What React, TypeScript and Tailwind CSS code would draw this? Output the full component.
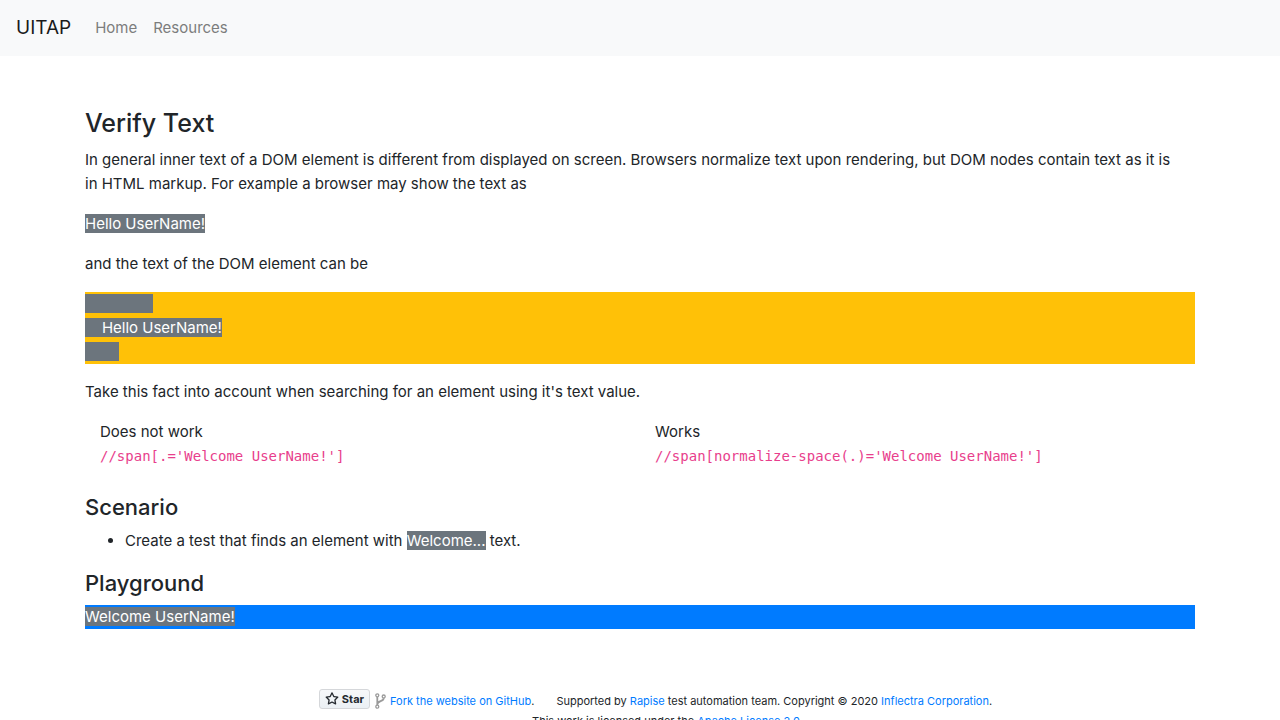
import React from "react";

const mark = "bg-[#6c757d] text-white";
const link = "text-[#007bff] hover:underline";
const code = "font-['DejaVu_Sans_Mono',monospace] text-sm leading-6 text-[#e83e8c]";

export default function App() {
  return (
    <div className="bg-white font-[Inter,sans-serif] text-[15px] leading-6 text-[#212529]">
      <nav className="flex h-14 items-center bg-[#f8f9fa] px-4">
        <a href="#" className="mr-4 text-[19px] text-[#1a1a1a]">UITAP</a>
        <ul className="flex text-[#7c7d7d]">
          <li><a href="#" className="p-2">Home</a></li>
          <li><a href="#" className="p-2">Resources</a></li>
        </ul>
      </nav>
      <main className="mx-auto max-w-[1140px] px-[15px] pt-[50px]">
        <h3 className="mb-2 text-[25px] leading-[34px] font-medium">Verify Text</h3>
        <p className="mb-4">
          In general inner text of a DOM element is different from displayed on screen. Browsers normalize text upon rendering, but DOM nodes contain text as it is<br />
          in HTML markup. For example a browser may show the text as
        </p>
        <p className="mb-4"><span className={mark}>Hello UserName!</span></p>
        <p className="mb-4">and the text of the DOM element can be</p>
        <div className="mb-4 bg-[#ffc107] whitespace-pre">
          <span className={mark}>{"                \n    Hello UserName!\n        "}</span>
        </div>
        <p className="mb-4">Take this fact into account when searching for an element using it's text value.</p>
        <div className="mb-[25px] grid grid-cols-2">
          <div className="px-[15px]"><div>Does not work</div><code className={code}>//span[.='Welcome UserName!']</code></div>
          <div className="px-[15px]"><div>Works</div><code className={code}>//span[normalize-space(.)='Welcome UserName!']</code></div>
        </div>
        <h4 className="mb-2 text-[22px] leading-7 font-medium">Scenario</h4>
        <ul className="mb-4 list-disc pl-10">
          <li>Create a test that finds an element with <span className={mark}>Welcome...</span> text.</li>
        </ul>
        <h4 className="mb-2 text-[22px] leading-7 font-medium">Playground</h4>
        <div className="bg-[#007bff]"><span className={mark}>Welcome UserName!</span></div>
      </main>
      <footer className="mt-[60px] pl-[55px] text-[11px] leading-5">
        <div className="flex items-start justify-center pr-6">
          <a href="#" className="mr-[5px] flex h-5 items-center gap-[3px] rounded-[3px] border border-[#d5d7da] bg-linear-to-b from-[#f6f8fa] to-[#ebf0f4] px-[5px] font-bold text-[#24292f]">
            <svg viewBox="0 0 16 16" className="size-3.5" fill="currentColor" aria-hidden="true"><path d="M8 .25a.75.75 0 0 1 .673.418l1.882 3.815 4.21.612a.75.75 0 0 1 .416 1.279l-3.046 2.97.719 4.192a.75.75 0 0 1-1.088.791L8 12.347l-3.766 1.98a.75.75 0 0 1-1.088-.79l.72-4.194L.818 6.374a.75.75 0 0 1 .416-1.28l4.21-.611L7.327.668A.75.75 0 0 1 8 .25Zm0 2.445L6.615 5.5a.75.75 0 0 1-.564.41l-3.097.45 2.24 2.184a.75.75 0 0 1 .216.664l-.528 3.084 2.769-1.456a.75.75 0 0 1 .698 0l2.77 1.456-.53-3.084a.75.75 0 0 1 .216-.664l2.24-2.183-3.096-.45a.75.75 0 0 1-.564-.41Z" /></svg>
            Star
          </a>
          <div className="mt-0.5 flex h-5 items-center">
            <svg viewBox="0 0 11 16" className="mr-1 h-4 w-[11px]" fill="none" stroke="#9a9a9a" aria-hidden="true">
              <circle cx="2.300" cy="2.300" r="1.500" strokeWidth="1.300" />
              <circle cx="2.300" cy="13.700" r="1.500" strokeWidth="1.300" />
              <circle cx="8.700" cy="3.500" r="1.500" strokeWidth="1.300" />
              <path d="M2.300 4v8M8.700 5.200C8.700 8.800 2.300 7.500 2.300 11.500" strokeWidth="1.800" />
            </svg>
            <span className="mr-[22px]"><a href="#" className={link}>Fork the website on GitHub</a>.</span>
            <span>Supported by <a href="#" className={link}>Rapise</a> test automation team. Copyright © 2020 <a href="#" className={link}>Inflectra Corporation</a>.</span>
          </div>
        </div>
        <div className="text-center">This work is licensed under the <a href="#" className={link}>Apache License 2.0</a>.</div>
      </footer>
    </div>
  );
}
